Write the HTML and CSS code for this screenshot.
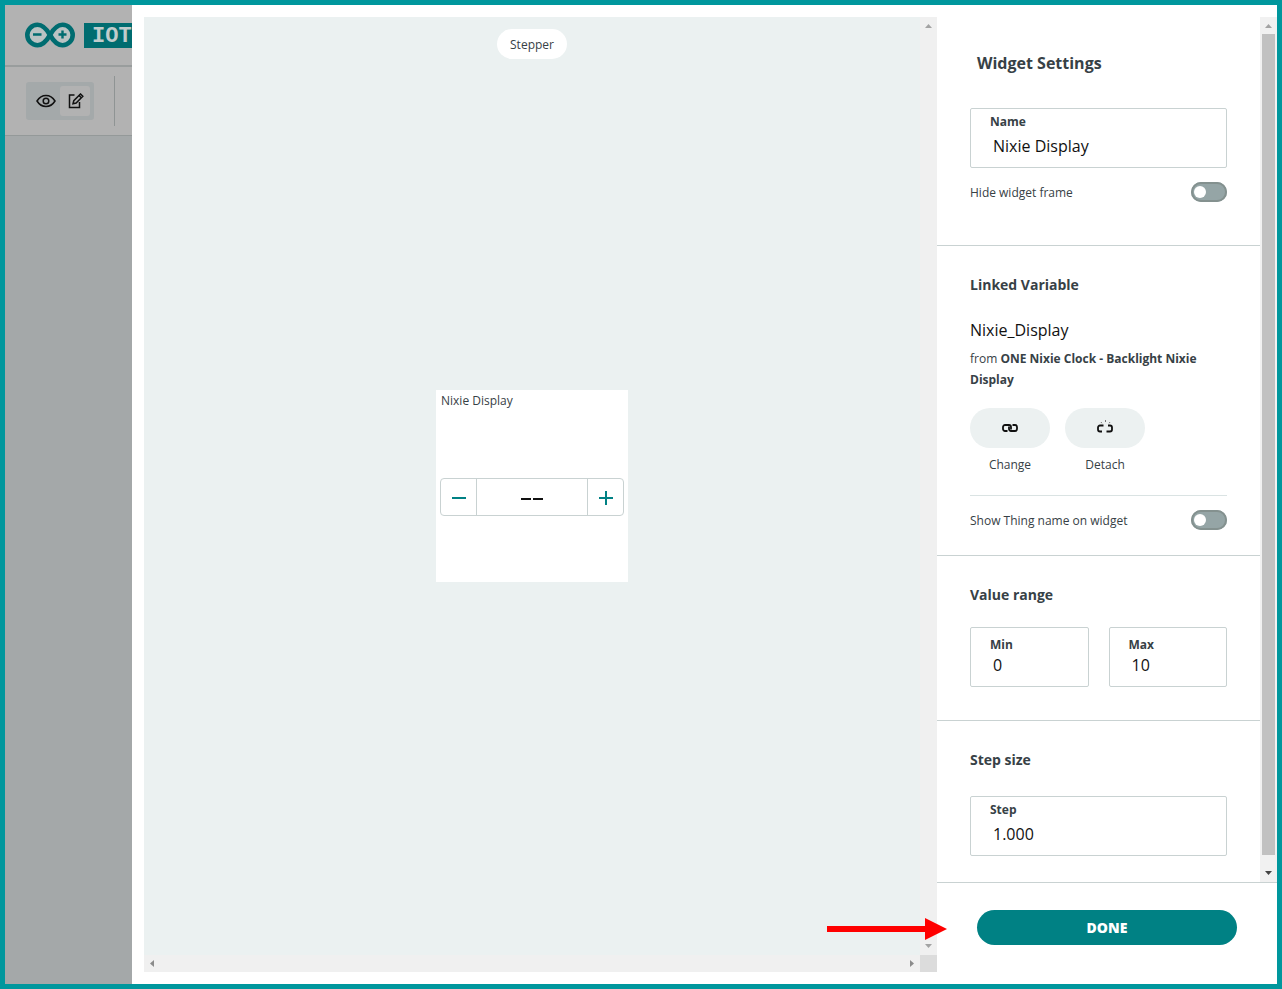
FILE: index.html
```html
<!DOCTYPE html>
<html lang="en">
<head>
<meta charset="utf-8">
<title>Widget Settings</title>
<link rel="stylesheet" href="styles.css">
</head>
<body>
<div class="frame">
  <aside class="backdrop">
    <header class="brand">
      <svg class="brand-mark" width="52" height="26" viewBox="0 0 52 26" fill="#b9c3c3" stroke="#006c70" aria-hidden="true">
        <path stroke-width="4.600" d="M26 13C22 6 18.500 2.800 13.500 2.800a10.200 10.200 0 0 0 0 20.400c5 0 8.500-3.200 12.500-10.200s7.500-10.200 12.500-10.200a10.200 10.200 0 0 1 0 20.400c-5 0-8.500-3.200-12.500-10.200z"/>
        <path stroke-width="2.400" d="M9 12.500h8.500M34.500 12.500h8M38.500 8.500v8"/>
      </svg>
      <span class="brand-tag">IOT</span>
    </header>
    <div class="toolbar">
      <div class="modes">
        <button class="mode" type="button" aria-label="View">
          <svg width="20" height="14" viewBox="0 0 20 14" fill="none" stroke="#111" stroke-width="1.500"><path d="M1 7c2.300-3.700 5.300-5.500 9-5.500S16.700 3.300 19 7c-2.300 3.700-5.300 5.500-9 5.500S3.300 10.700 1 7z"/><circle cx="10" cy="7" r="2.800"/></svg>
        </button>
        <button class="mode mode-active" type="button" aria-label="Edit">
          <svg width="16" height="16" viewBox="0 0 16 16" fill="none" stroke="#111" stroke-width="1.500"><path d="M6.500 2H1.500v12.500h10V9"/><path d="M5 10.800l.8-3.200L12.500 1l2.300 2.200-6.700 6.800zM11 2.500l2.300 2.200"/></svg>
        </button>
      </div>
      <span class="toolbar-rule"></span>
    </div>
  </aside>

  <main class="dialog">
    <section class="preview">
      <div class="stage">
        <span class="pill">Stepper</span>
        <div class="widget">
          <span class="widget-name">Nixie Display</span>
          <div class="stepper">
            <button type="button" class="step" aria-label="Decrease"><svg width="14" height="14" stroke="#008184" stroke-width="2"><path d="M0 8h14"/></svg></button>
            <output class="step-value"><svg width="24" height="14" stroke="#111" stroke-width="1.800" role="img" aria-label="No value"><path d="M1 9h10M13 9h10"/></svg></output>
            <button type="button" class="step" aria-label="Increase"><svg width="14" height="16" stroke="#008184" stroke-width="2"><path d="M0 9h14M7 2v14"/></svg></button>
          </div>
        </div>
      </div>
      <div class="track track-y">
        <svg width="7" height="4" fill="#a3a3a3"><path d="M0 4L3.500 0 7 4z"/></svg>
        <svg width="7" height="4" fill="#a3a3a3"><path d="M0 0h7L3.500 4z"/></svg>
      </div>
      <div class="track track-x">
        <svg width="4" height="7" fill="#8b8b8b"><path d="M4 0v7L0 3.500z"/></svg>
        <svg width="4" height="7" fill="#8b8b8b"><path d="M0 0v7l4-3.500z"/></svg>
      </div>
      <div class="corner"></div>
      <svg class="pointer" width="120" height="22" viewBox="0 0 120 22" fill="#f00" aria-hidden="true"><path d="M0 8h98V0l22 11-22 11v-8H0z"/></svg>
    </section>

    <form class="settings">
      <div class="scroller">
        <div class="groups">
          <section class="group group-main">
            <h1 class="title">Widget Settings</h1>
            <div class="field">
              <label for="name">Name</label>
              <input id="name" type="text" value="Nixie Display">
            </div>
            <div class="switch-row">
              <label for="hide">Hide widget frame</label>
              <input id="hide" class="switch" type="checkbox" role="switch">
            </div>
          </section>
          <section class="group group-linked">
            <h2 class="heading">Linked Variable</h2>
            <p class="variable">Nixie_Display</p>
            <p class="source">from <strong>ONE Nixie Clock - Backlight Nixie Display</strong></p>
            <div class="actions">
              <div class="action">
                <button id="change" type="button" aria-labelledby="change-label">
                  <svg width="16" height="10" viewBox="0 0 16 10" fill="none" stroke="#111" stroke-width="1.800"><path d="M5.500 8H3A2 2 0 0 1 1 6V4A2 2 0 0 1 3 2h4A2 2 0 0 1 9 4V6.500"/><path d="M10.500 2H13A2 2 0 0 1 15 4v2A2 2 0 0 1 13 8H9A2 2 0 0 1 7 6V3.500"/></svg>
                </button>
                <label id="change-label" for="change">Change</label>
              </div>
              <div class="action">
                <button id="detach" type="button" aria-labelledby="detach-label">
                  <svg width="18" height="16" viewBox="0 0 18 16" fill="none" stroke="#111" stroke-width="1.800"><path d="M7.500 5.500H4A2 2 0 0 0 2 7.500v2a2 2 0 0 0 2 2H6M12 5.500h2A2 2 0 0 1 16 7.500v2a2 2 0 0 1-2 2H10.500"/><path stroke="#777" stroke-width="1" d="M5 2l.8 1.200M9.500 0v2M14 2l-.8 1.200"/></svg>
                </button>
                <label id="detach-label" for="detach">Detach</label>
              </div>
            </div>
            <div class="switch-row ruled">
              <label for="thing">Show Thing name on widget</label>
              <input id="thing" class="switch" type="checkbox" role="switch">
            </div>
          </section>
          <section class="group group-range">
            <h2 class="heading">Value range</h2>
            <div class="pair">
              <div class="field field-tight"><label for="min">Min</label><input id="min" type="text" value="0"></div>
              <div class="field field-tight"><label for="max">Max</label><input id="max" type="text" value="10"></div>
            </div>
          </section>
          <section class="group group-step">
            <h2 class="heading">Step size</h2>
            <div class="field"><label for="step">Step</label><input id="step" type="text" value="1.000"></div>
          </section>
        </div>
        <div class="bar">
          <svg width="7" height="4" fill="#a3a3a3"><path d="M0 4L3.500 0 7 4z"/></svg>
          <span class="thumb"></span>
          <svg width="7" height="4" fill="#444"><path d="M0 0h7L3.500 4z"/></svg>
        </div>
      </div>
      <footer class="footer"><button class="done" type="button">DONE</button></footer>
    </form>
  </main>
</div>
</body>
</html>
```

FILE: styles.css
```css
*, *::before { box-sizing: border-box; }
body, h1, h2, p { margin: 0; }
body {
  font: 12px/18px "Open Sans", "Noto Sans", sans-serif;
  color: #374146;
}
button, input { font: inherit; color: inherit; margin: 0; padding: 0; border: 0; }
button { cursor: pointer; }
svg { display: block; flex: none; }

.frame {
  display: flex;
  min-height: 100vh;
  border: 5px solid #00979d;
}

/* Dimmed page behind the dialog */
.backdrop { flex: 0 0 127px; overflow: hidden; background: #a4a8a9; }
.brand {
  display: flex;
  align-items: center;
  gap: 8px;
  height: 62px;
  padding-left: 19px;
  border-bottom: 2px solid #999d9d;
  background: #b2b2b2;
}
.brand-tag {
  flex: none;
  padding: 2px 8px 0;
  background: #006c70;
  color: #c0cccc;
  font: bold 22px/23px "Liberation Mono", monospace;
}
.toolbar {
  display: flex;
  align-items: center;
  gap: 20px;
  height: 69px;
  padding-left: 21px;
  border-bottom: 1px solid #949999;
  background: #b2b2b2;
}
.modes {
  display: flex;
  padding: 4px;
  border-radius: 3px;
  background: #a4a9aa;
}
.mode {
  display: grid;
  place-items: center;
  width: 30px;
  height: 30px;
  padding-left: 2px;
  border-radius: 3px;
  background: none;
}
.mode-active { background: #b2b2b2; }
.toolbar-rule { width: 1px; height: 50px; background: #8f9494; }

.dialog {
  flex: 1;
  display: flex;
  padding: 12px 0 12px 12px;
  background: #fff;
}

/* Preview canvas */
.preview {
  position: relative;
  flex: 1;
  display: grid;
  grid-template: 1fr 17px / 1fr 17px;
}
.stage {
  display: grid;
  grid-template-rows: 1fr auto 1fr;
  justify-items: center;
  padding: 12px 0;
  background: #ebf1f1;
}
.pill {
  align-self: start;
  padding: 7px 13px 5px;
  border-radius: 15px;
  background: #fff;
}
.widget {
  grid-row: 2;
  display: grid;
  grid-template-rows: 20px 1fr;
  width: 192px;
  height: 192px;
  padding: 2px 4px 0;
  background: #fff;
}
.widget-name { padding-left: 1px; }
.stepper {
  display: flex;
  align-self: center;
  height: 38px;
  border: 1px solid #c9d2d2;
  border-radius: 4px;
}
.step { display: grid; place-items: center; width: 35px; background: none; }
.step-value {
  flex: 1;
  display: grid;
  place-items: center;
  border: solid #c9d2d2;
  border-width: 0 1px;
}
.track {
  display: flex;
  justify-content: space-between;
  align-items: center;
  background: #f0f0f0;
}
.track-y { flex-direction: column; padding: 7px 0; }
.track-x { padding: 0 6px; }
.corner { background: #dcdcdc; }
.pointer { position: absolute; right: -10px; bottom: 32px; }

/* Settings column */
.settings { flex: 0 0 340px; display: flex; flex-direction: column; }
.scroller { flex: 1; display: flex; }
.groups { flex: 1; }
.group { padding: 29px 33px 0; border-bottom: 1px solid #c9d2d2; }
.group-main { padding-top: 34px; padding-bottom: 43px; }
.group-linked { padding-bottom: 25px; }
.group-range { padding-bottom: 33px; }
.group-step { padding-bottom: 26px; border-bottom: 0; }
.title { margin: 0 7px 33px; font-size: 16px; line-height: 24px; }
.heading { font-size: 14px; line-height: 20px; }
.group-range .heading { margin-bottom: 22px; }
.group-step .heading { margin-bottom: 26px; }

.field {
  flex: 1;
  min-width: 0;
  height: 60px;
  padding: 4px 19px 0;
  border: 1px solid #c9d2d2;
  border-radius: 2px;
}
.field label { display: block; margin-bottom: 4px; font-weight: bold; }
.field input {
  display: block;
  width: 100%;
  height: 22px;
  padding-left: 3px;
  background: none;
  color: #111;
  font-size: 16px;
}
.field-tight { padding-top: 8px; }
.field-tight label { margin-bottom: 0; }
.pair { display: flex; gap: 20px; }

.switch-row {
  display: flex;
  align-items: center;
  justify-content: space-between;
  margin-top: 14px;
}
.switch-row label { padding-top: 2px; }
.switch-row.ruled { margin-top: 21px; padding-top: 14px; border-top: 1px solid #dae3e3; }
.switch {
  appearance: none;
  width: 36px;
  height: 20px;
  padding: 4px 3px;
  border-radius: 10px;
  background: #95a5a6;
  box-shadow: inset 0 0 0 2px #84918f;
}
.switch::before {
  content: "";
  display: block;
  width: 12px;
  height: 12px;
  border-radius: 50%;
  background: #fff;
}
.switch:checked::before { margin-left: auto; }

.variable { margin-top: 23px; font-size: 16px; line-height: 24px; color: #111; }
.source { margin-top: 6px; line-height: 21px; }
.actions { display: flex; gap: 15px; margin-top: 18px; }
.action { display: flex; flex-direction: column; align-items: center; gap: 8px; }
.action button {
  display: grid;
  place-items: center;
  width: 80px;
  height: 40px;
  border-radius: 20px;
  background: #ecf1f1;
}

.bar {
  display: flex;
  flex-direction: column;
  align-items: center;
  gap: 6px;
  width: 17px;
  padding: 7px 0;
  background: #f1f1f1;
}
.thumb { flex: 1; width: 13px; margin-bottom: 10px; background: #c1c1c1; }

.footer { padding: 27px 40px; border-top: 1px solid #c9d2d2; }
.done {
  width: 100%;
  height: 35px;
  border-radius: 18px;
  background: #008184;
  color: #fff;
  font-size: 14px;
  font-weight: 800;
}
```
